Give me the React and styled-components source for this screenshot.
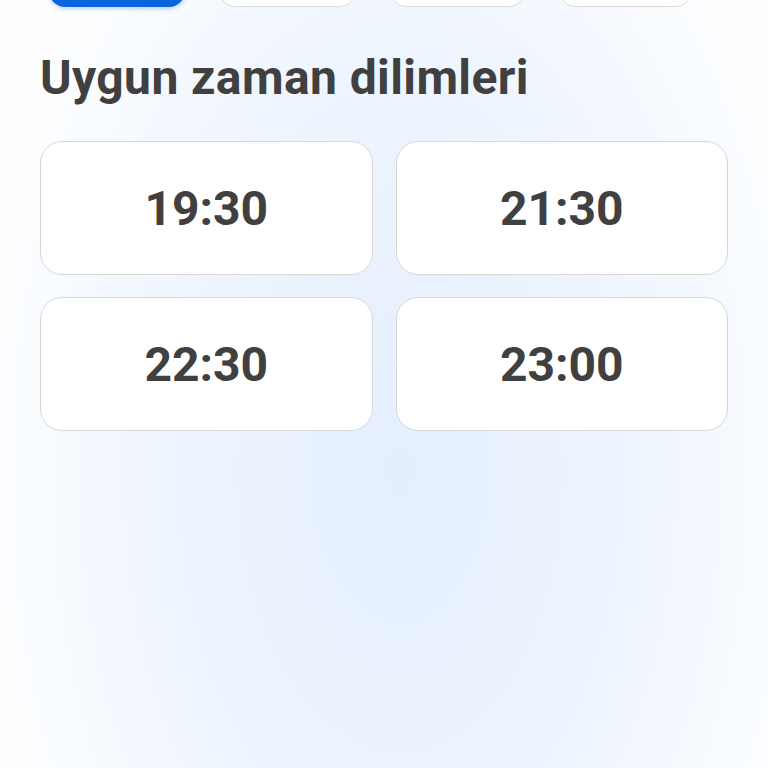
import React from "react";
import styled, { createGlobalStyle } from "styled-components";

const Global = createGlobalStyle`
  html, body { margin: 0; padding: 0; }
  body {
    font-family: Roboto, "Noto Sans", Arial, sans-serif;
    background: #ffffff;
  }
`;

const Page = styled.div`
  width: 768px;
  height: 768px;
  overflow: hidden;
  box-sizing: border-box;
  padding: 0 40px;
  background:
    radial-gradient(ellipse 440px 760px at 400px 470px, #e4eefd 0%, #ebf3fe 40%, #f4f8fe 70%, #fbfdff 90%, #fefeff 100%);
`;

const ChipRow = styled.div`
  display: flex;
  gap: 34px;
  margin-top: -43px;
  padding-left: 9px;
`;

const Chip = styled.div`
  width: ${(p) => p.$w}px;
  height: 50px;
  box-sizing: border-box;
  border-radius: 16px;
  background: ${(p) => (p.$active ? "#0b63dd" : "#ffffff")};
  border: ${(p) => (p.$active ? "none" : "1.5px solid #dcdcdc")};
  box-shadow: ${(p) => (p.$active ? "0 2px 4px rgba(11,99,221,0.25)" : "none")};
`;

const Heading = styled.h2`
  margin: 43px 0 0;
  font-size: 48px;
  line-height: 56px;
  font-weight: 700;
  color: #404040;
  letter-spacing: 0.4px;
`;

const Grid = styled.div`
  margin-top: 35px;
  display: grid;
  grid-template-columns: 1fr 1fr;
  column-gap: 23px;
  row-gap: 22px;
`;

const Slot = styled.button`
  height: 134px;
  box-sizing: border-box;
  border-radius: 22px;
  border: 1.5px solid #d8d8d8;
  background: #ffffff;
  display: flex;
  align-items: center;
  justify-content: center;
  font-family: Roboto, "Noto Sans", Arial, sans-serif;
  font-size: 48px;
  font-weight: 700;
  color: #404040;
  padding: 0;
  cursor: pointer;
`;

const chips = [
  { w: 136, active: true },
  { w: 137 },
  { w: 135 },
  { w: 133 },
];

const slots = ["19:30", "21:30", "22:30", "23:00"];

export default function App() {
  return (
    <>
      <Global />
      <Page>
        <ChipRow>
          {chips.map((c, i) => (
            <Chip key={i} $w={c.w} $active={c.active} />
          ))}
        </ChipRow>
        <Heading>Uygun zaman dilimleri</Heading>
        <Grid>
          {slots.map((s) => (
            <Slot key={s}>{s}</Slot>
          ))}
        </Grid>
      </Page>
    </>
  );
}
